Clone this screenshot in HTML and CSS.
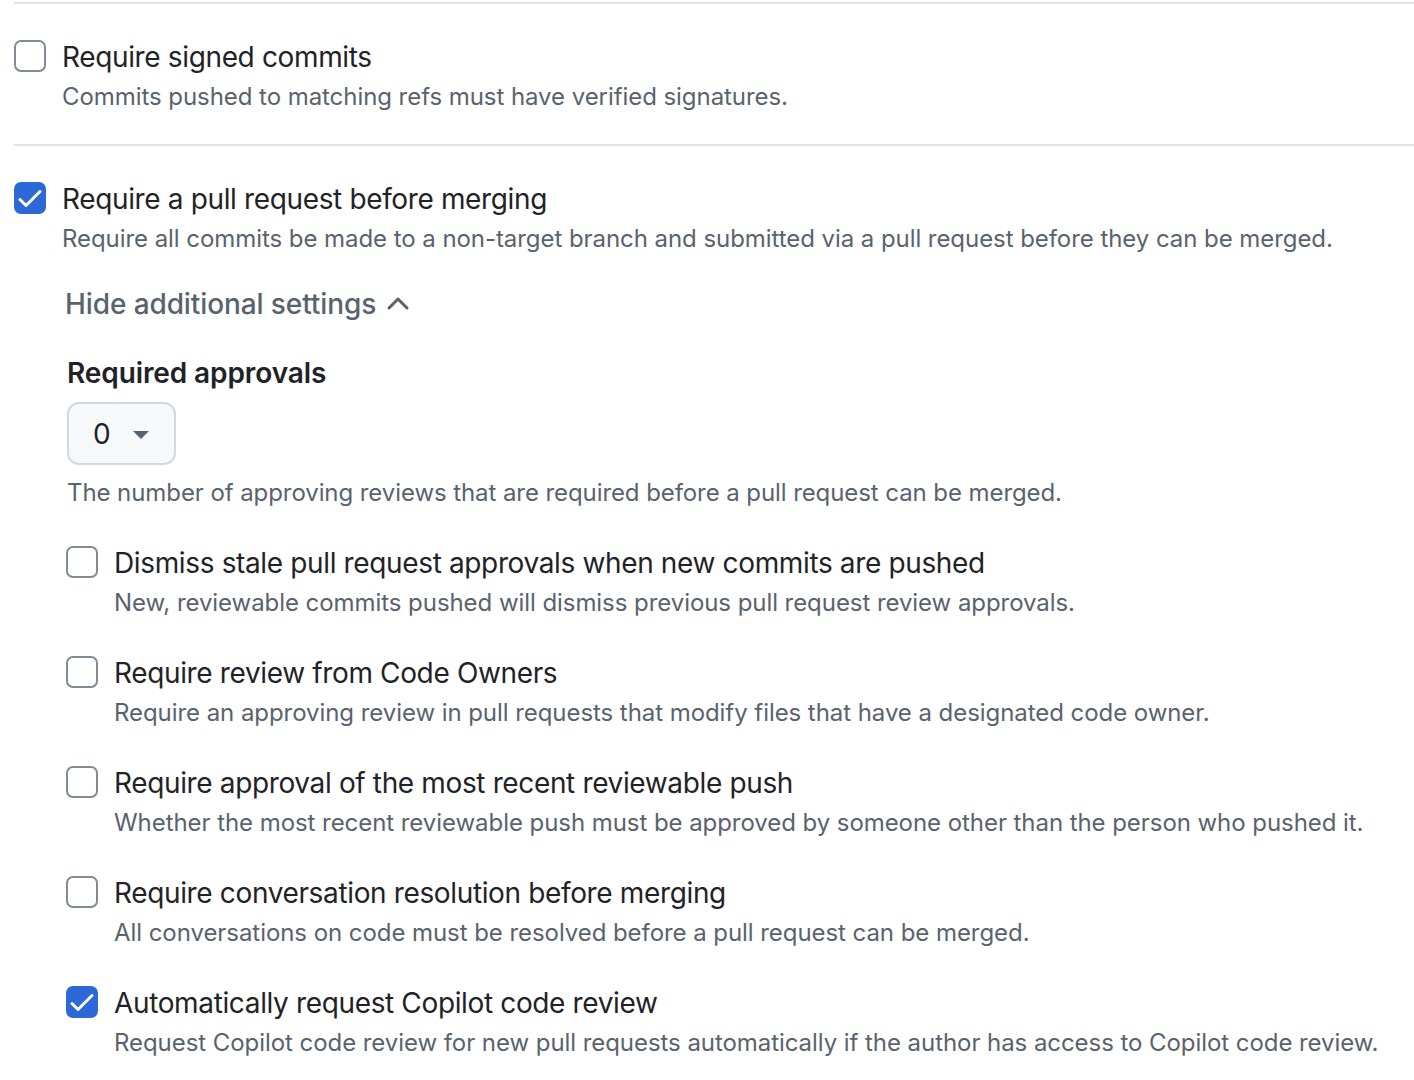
FILE: index.html
```html
<!DOCTYPE html>
<html lang="en">
<head>
<meta charset="utf-8">
<title>Branch rules</title>
<link rel="stylesheet" href="styles.css">
</head>
<body>
<div class="rules">
  <section class="rule">
    <div class="control">
      <span class="checkbox"></span>
      <div class="text">
        <div class="title">Require signed commits</div>
        <div class="desc">Commits pushed to matching refs must have verified signatures.</div>
      </div>
    </div>
  </section>
  <section class="rule">
    <div class="control">
      <span class="checkbox checked"><svg viewBox="0 0 32 32" width="32" height="32"><polyline points="6,17.5 12,23.5 26,9.5" fill="none" stroke="#fff" stroke-width="3" stroke-linecap="round" stroke-linejoin="round"/></svg></span>
      <div class="text">
        <div class="title">Require a pull request before merging</div>
        <div class="desc">Require all commits be made to a non-target branch and submitted via a pull request before they can be merged.</div>
      </div>
    </div>
    <div class="settings">
      <div class="toggle">Hide additional settings <svg class="chev" viewBox="0 0 24 16" width="24" height="16"><polyline points="3,13 12,4 21,13" fill="none" stroke="#59636e" stroke-width="3" stroke-linecap="round" stroke-linejoin="round"/></svg></div>
      <div class="field">
        <div class="label">Required approvals</div>
        <div class="select"><span class="value">0</span><svg class="caret" viewBox="0 0 16 8" width="16" height="8"><polygon points="0,0 16,0 8,8" fill="#59636e"/></svg></div>
        <div class="help">The number of approving reviews that are required before a pull request can be merged.</div>
      </div>
      <div class="sub-list">
        <div class="control">
          <span class="checkbox"></span>
          <div class="text">
            <div class="title">Dismiss stale pull request approvals when new commits are pushed</div>
            <div class="desc">New, reviewable commits pushed will dismiss previous pull request review approvals.</div>
          </div>
        </div>
        <div class="control">
          <span class="checkbox"></span>
          <div class="text">
            <div class="title">Require review from Code Owners</div>
            <div class="desc">Require an approving review in pull requests that modify files that have a designated code owner.</div>
          </div>
        </div>
        <div class="control">
          <span class="checkbox"></span>
          <div class="text">
            <div class="title">Require approval of the most recent reviewable push</div>
            <div class="desc">Whether the most recent reviewable push must be approved by someone other than the person who pushed it.</div>
          </div>
        </div>
        <div class="control">
          <span class="checkbox"></span>
          <div class="text">
            <div class="title">Require conversation resolution before merging</div>
            <div class="desc">All conversations on code must be resolved before a pull request can be merged.</div>
          </div>
        </div>
        <div class="control">
          <span class="checkbox checked"><svg viewBox="0 0 32 32" width="32" height="32"><polyline points="6,17.5 12,23.5 26,9.5" fill="none" stroke="#fff" stroke-width="3" stroke-linecap="round" stroke-linejoin="round"/></svg></span>
          <div class="text">
            <div class="title">Automatically request Copilot code review</div>
            <div class="desc">Request Copilot code review for new pull requests automatically if the author has access to Copilot code review.</div>
          </div>
        </div>
      </div>
    </div>
  </section>
</div>
</body>
</html>
```
FILE: styles.css
```css
* { box-sizing: border-box; }
html, body { margin: 0; padding: 0; background: #ffffff; }
body {
  font-family: Inter, "Liberation Sans", sans-serif;
  color: #1f2328;
  width: 1414px;
  overflow: hidden;
}
.rules {
  margin: 2px 0 0 14px;
}
.rule {
  border-top: 2px solid #dfe3e8;
  padding: 33px 0 29px 0;
}
.control {
  display: flex;
  gap: 16px;
  align-items: flex-start;
}
.checkbox {
  flex: none;
  width: 32px;
  height: 32px;
  margin-top: 3px;
  border: 2px solid #818b98;
  border-radius: 7px;
  background: #fff;
  display: block;
}
.checkbox.checked {
  background: #2c68d6;
  border-color: #2c68d6;
  position: relative;
}
.checkbox.checked svg {
  position: absolute;
  left: -2px;
  top: -2px;
}
.title {
  font-size: 28px;
  line-height: 40px;
  letter-spacing: -0.36px;
  color: #1f2328;
}
.desc {
  margin-top: 2px;
  font-size: 24px;
  line-height: 36px;
  letter-spacing: -0.06px;
  color: #59636e;
}
.settings {
  margin-left: 52px;
}
.toggle {
  margin-top: 27px;
  margin-left: -1px;
  font-size: 28px;
  line-height: 40px;
  font-weight: 500;
  letter-spacing: -0.1px;
  color: #59636e;
  display: flex;
  align-items: center;
  gap: 10px;
}
.chev { margin-top: -2px; }
.field {
  margin-top: 29px;
  margin-left: 1px;
}
.label {
  font-size: 28px;
  line-height: 40px;
  font-weight: 600;
  letter-spacing: -0.1px;
  color: #1f2328;
}
.select {
  margin-top: 9px;
  width: 109px;
  height: 63px;
  border: 2px solid #d1d9e0;
  border-radius: 12px;
  background: #f6f8fa;
  display: flex;
  align-items: center;
  padding-left: 24px;
  gap: 22px;
}
.value {
  font-size: 28px;
  line-height: 40px;
  color: #1f2328;
}
.caret { margin-top: 2px; }
.help {
  margin-top: 10px;
  font-size: 24px;
  line-height: 36px;
  letter-spacing: -0.08px;
  color: #59636e;
}
.sub-list {
  margin-top: 32px;
  display: flex;
  flex-direction: column;
  gap: 32px;
}
```
